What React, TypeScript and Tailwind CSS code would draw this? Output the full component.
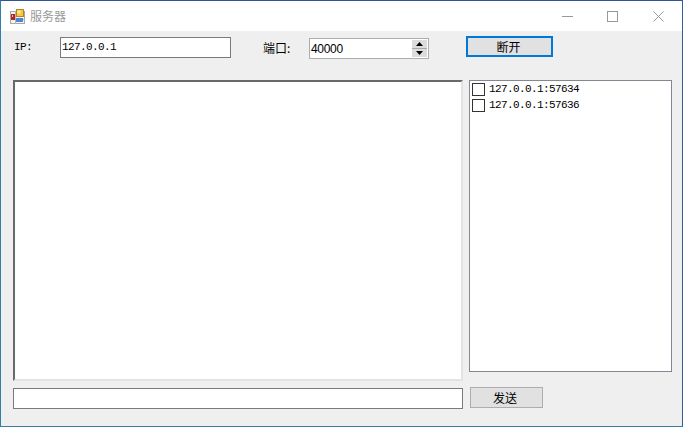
import React from 'react';

const mono = "font-['Liberation_Mono','Noto_Sans_CJK_SC',monospace] text-[11px] tracking-[-0.6px] text-black";
const cjk = "font-['Noto_Sans_CJK_SC',sans-serif] text-[12px] text-black";

const AppIcon = () => (
  <svg width="15" height="15" viewBox="0 0 15 15" className="shrink-0">
    <rect x="0.5" y="2.5" width="14" height="12" fill="#f4f4f4" stroke="#a8a8a8" />
    <path d="M0 10.5h15M0 5.5h5M5.5 3v12" stroke="#b4b4b4" fill="none" />
    <rect x="1" y="5" width="4" height="6" fill="#b3261e" />
    <rect x="2" y="6" width="1" height="2" fill="#f0c0b0" />
    <rect x="6.5" y="0.5" width="7" height="7" fill="#f6c93c" stroke="#b5842a" />
    <rect x="7.5" y="1.5" width="3" height="3" fill="#fdeca0" />
    <rect x="6" y="9" width="7" height="4" fill="#4f86d8" />
  </svg>
);

const ClientRow = ({ label }: { label: string }) => (
  <div className="flex h-4 items-center">
    <span className="ml-[2px] h-[13px] w-[13px] shrink-0 border border-[#333333] bg-white" />
    <span className={`ml-[4px] ${mono}`}>{label}</span>
  </div>
);

const Spinner = () => (
  <div className="flex h-[17px] w-[15px] flex-col gap-px bg-[#a9a9a9]">
    <div className="flex h-2 items-center justify-center bg-[#dcdcdc]">
      <svg width="7" height="4" viewBox="0 0 7 4"><path d="M3.5 0L7 4H0z" fill="#000" /></svg>
    </div>
    <div className="flex h-2 items-center justify-center bg-[#dcdcdc]">
      <svg width="7" height="4" viewBox="0 0 7 4"><path d="M0 0h7L3.5 4z" fill="#000" /></svg>
    </div>
  </div>
);

export default function App() {
  return (
    <div className="flex h-[427px] w-[683px] flex-col overflow-hidden border border-t-[#2f5597] border-r-[#3a5a9f] border-b-[#3b7f9f] border-l-[#2f7fa8] bg-[#efefef]">
      {/* title bar */}
      <div className="flex h-[30px] shrink-0 items-center bg-white pl-[9px]">
        <AppIcon />
        <span className="ml-[5px] font-['Noto_Sans_CJK_SC',sans-serif] text-[12px] text-[#999999]">服务器</span>
        <div className="ml-auto flex items-center pr-[18px]">
          <svg width="11" height="11" viewBox="0 0 11 11"><path d="M0 5.5h11" stroke="#999" /></svg>
          <svg width="11" height="11" viewBox="0 0 11 11" className="ml-[34px]"><rect x="0.5" y="0.5" width="10" height="10" fill="none" stroke="#999" /></svg>
          <svg width="11" height="11" viewBox="0 0 11 11" className="ml-[35px]"><path d="M0.5 0.5l10 10M10.5 0.5l-10 10" stroke="#999" /></svg>
        </div>
      </div>

      {/* connection row */}
      <div className="flex h-[49px] shrink-0 items-start pt-[5px]">
        <span className={`ml-[13px] mt-[1px] h-[21px] w-[46px] leading-[21px] ${mono}`}>IP:</span>
        <div className={`mt-px flex h-[21px] w-[171px] items-center border border-[#7a7a7a] bg-white pl-px ${mono}`}>127.0.0.1</div>
        <span className={`ml-[33px] mt-px h-[21px] w-[45px] -translate-x-px leading-[21px] ${cjk}`}>端口:</span>
        <div className="mt-[2px] flex h-[21px] w-[120px] items-center justify-between border border-[#adadad] bg-white pl-px pr-[1px]">
          <span className="font-['Liberation_Sans',sans-serif] text-[12px] tracking-[-0.3px] text-black">40000</span>
          <Spinner />
        </div>
        <button className={`ml-[37px] h-[21px] w-[87px] border-2 border-[#0078d7] bg-[#e1e1e1] pr-[2px] ${cjk}`}>断开</button>
      </div>

      {/* log, clients and send */}
      <div className="flex items-start pl-3">
        <div className="flex w-[450px] flex-col gap-[7px]">
          <div className="h-[301px] border-2 border-t-[#696969] border-r-[#e3e3e3] border-b-[#e3e3e3] border-l-[#696969] bg-white" />
          <div className="h-[21px] border border-[#7a7a7a] bg-white" />
        </div>
        <div className="ml-[6px] flex flex-col items-start">
          <div className="h-[292px] w-[203px] border border-[#828790] bg-white">
            <ClientRow label="127.0.0.1:57634" />
            <ClientRow label="127.0.0.1:57636" />
          </div>
          <button className={`ml-px mt-[15px] h-[21px] w-[73px] border border-[#adadad] bg-[#e1e1e1] pr-[3px] ${cjk}`}>发送</button>
        </div>
      </div>
    </div>
  );
}
